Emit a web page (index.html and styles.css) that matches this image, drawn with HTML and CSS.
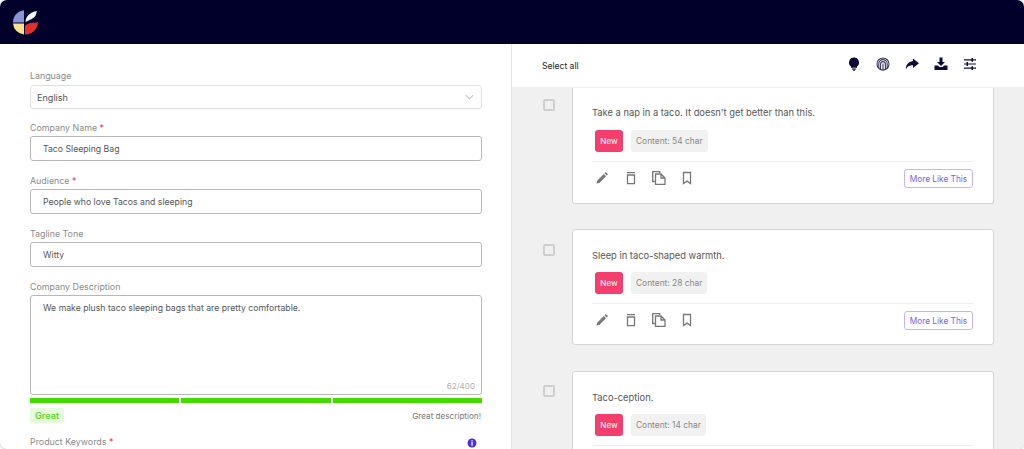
FILE: index.html
```html
<!DOCTYPE html>
<html lang="en">
<head>
<meta charset="utf-8">
<title>Tagline generator</title>
<link rel="stylesheet" href="styles.css">
</head>
<body>
<header class="topbar">
  <svg class="logo" viewBox="0 0 28 28" width="28" height="28">
    <path d="M13 2.200 A12.200 12.200 0 0 0 2 14.500 L13 14.500 Z" fill="#8a94d8"/>
    <path d="M13 15.500 L2 15.500 A12 12 0 0 0 13 26.500 Z" fill="#f8e08e"/>
    <path d="M14 26.500 A12.200 12.200 0 0 0 26.800 14 C23 15.500 17 14 14 18 Z" fill="#e0312f"/>
    <path d="M14.500 14 C14.500 8.500 19.500 4 26 3 C25 5 25.500 7 23.500 9 C22.500 10.500 19 11.500 14.500 14 Z" fill="#f4f4f4"/>
  </svg>
</header>
<main class="layout">
  <section class="form">
    <div class="field field-first">
      <label class="label">Language</label>
      <div class="select">English
        <svg class="chevron" viewBox="0 0 10 6" width="9" height="6"><path d="M1 1l4 4 4-4" fill="none" stroke="#c4c4c4" stroke-width="1.300"/></svg>
      </div>
    </div>
    <div class="field">
      <label class="label">Company Name <span class="req">*</span></label>
      <div class="input">Taco Sleeping Bag</div>
    </div>
    <div class="field">
      <label class="label">Audience <span class="req">*</span></label>
      <div class="input">People who love Tacos and sleeping</div>
    </div>
    <div class="field">
      <label class="label">Tagline Tone</label>
      <div class="input">Witty</div>
    </div>
    <div class="field field-last">
      <label class="label">Company Description</label>
      <div class="textarea">We make plush taco sleeping bags that are pretty comfortable.<span class="count">62/400</span></div>
    </div>
    <div class="meter"><span></span><span></span><span></span></div>
    <div class="quality"><span class="great">Great</span><span class="hint">Great description!</span></div>
    <div class="keywords">
      <label class="label">Product Keywords <span class="req">*</span></label>
      <svg class="info" viewBox="0 0 10 10" width="10" height="10"><circle cx="5" cy="5" r="4.500" fill="#4f2fe0"/><rect x="4.400" y="4.200" width="1.300" height="3.500" fill="#fff"/><rect x="4.400" y="2.300" width="1.300" height="1.300" fill="#fff"/></svg>
    </div>
  </section>
  <section class="results">
    <div class="toolbar">
      <span class="select-all">Select all</span>
      <div class="tools">
        <svg viewBox="0 0 14 14" width="14" height="14"><path d="M7 .5a5 5 0 0 0-3 9V10.800h6V9.500A5 5 0 0 0 7 .5zM5 11.500h4v.9H5zM6 12.800h2v.9H6z" fill="#0c0c38"/></svg>
        <svg viewBox="0 0 14 14" width="14" height="14" fill="none" stroke="#3a3a5c" stroke-width="1.100"><circle cx="7" cy="7" r="6"/><path d="M2.800 11V6.800a4.200 4.200 0 0 1 8.400 0V11.500M4.600 12.500V7a2.400 2.400 0 0 1 4.800 0v6M7 6.500V13.500"/></svg>
        <svg viewBox="0 0 14 14" width="14" height="14"><path d="M8 1.500l6 4.700-6 4.700V8.300C5 8.300 2.500 9 1 12.500c-.5-4 2-7.800 7-8.500z" fill="#0c0c38"/></svg>
        <svg viewBox="0 0 14 14" width="14" height="14"><path d="M5.500 .5h3v4.500H11L7 9 3 5h2.500zM.5 8.500h3.500L5.500 10h3L10 8.500h3.500v4.500H.5z" fill="#0c0c38"/></svg>
        <svg viewBox="0 0 14 14" width="14" height="14" fill="#0c0c38"><path d="M1 2.300h12v1.200H1zM1 6.400h12v1.200H1zM1 10.500h12v1.200H1z"/><path d="M8.500 1h1.500v3.800H8.500zM3.500 5.100h1.500v3.800H3.500zM8.500 9.200h1.500v3.800H8.500z"/></svg>
      </div>
    </div>
    <div class="list">
      <div class="row">
        <span class="check"></span>
        <article class="card">
          <p class="copy">Take a nap in a taco. It doesn't get better than this.</p>
          <div class="tags"><span class="new">New</span><span class="chars">Content: 54 char</span></div>
          <div class="actions">
            <svg viewBox="0 0 14 14" width="14" height="14"><path d="M1.500 12.500l.6-2.800 6.700-6.700 2.200 2.200-6.700 6.700zM9.500 2.300L10.800 1l2.200 2.200-1.300 1.300z" fill="#777"/></svg>
            <svg class="tight" viewBox="0 0 14 14" width="14" height="14" fill="none" stroke="#777" stroke-width="1.300"><path d="M3.500 4h7v8.700h-7zM3 1.700h8"/></svg>
            <svg class="tight-copy" viewBox="0 0 14 14" width="14" height="14" fill="none" stroke="#777" stroke-width="1.300"><path d="M2.700 10.500H.7V.7h7v1.300M3.500 3h5.500l4 4v6.400H3.500zM9 3v4h4"/></svg>
            <svg viewBox="0 0 14 14" width="14" height="14" fill="none" stroke="#777" stroke-width="1.300"><path d="M3.500 1.500h7v11l-3.500-2.400-3.500 2.400z"/></svg>
            <button class="more">More Like This</button>
          </div>
        </article>
      </div>
      <div class="row">
        <span class="check"></span>
        <article class="card">
          <p class="copy">Sleep in taco-shaped warmth.</p>
          <div class="tags"><span class="new">New</span><span class="chars">Content: 28 char</span></div>
          <div class="actions">
            <svg viewBox="0 0 14 14" width="14" height="14"><path d="M1.500 12.500l.6-2.800 6.700-6.700 2.200 2.200-6.700 6.700zM9.500 2.300L10.800 1l2.200 2.200-1.300 1.300z" fill="#777"/></svg>
            <svg class="tight" viewBox="0 0 14 14" width="14" height="14" fill="none" stroke="#777" stroke-width="1.300"><path d="M3.500 4h7v8.700h-7zM3 1.700h8"/></svg>
            <svg class="tight-copy" viewBox="0 0 14 14" width="14" height="14" fill="none" stroke="#777" stroke-width="1.300"><path d="M2.700 10.500H.7V.7h7v1.300M3.500 3h5.500l4 4v6.400H3.500zM9 3v4h4"/></svg>
            <svg viewBox="0 0 14 14" width="14" height="14" fill="none" stroke="#777" stroke-width="1.300"><path d="M3.500 1.500h7v11l-3.500-2.400-3.500 2.400z"/></svg>
            <button class="more">More Like This</button>
          </div>
        </article>
      </div>
      <div class="row">
        <span class="check"></span>
        <article class="card">
          <p class="copy">Taco-ception.</p>
          <div class="tags"><span class="new">New</span><span class="chars">Content: 14 char</span></div>
          <div class="actions"></div>
        </article>
      </div>
    </div>
  </section>
</main>
</body>
</html>
```
FILE: styles.css
```css
* { box-sizing: border-box; }
html { background: #fff; height: 100%; overflow: hidden; }
body {
  margin: 0;
  height: 100%;
  overflow: hidden;
  font-family: Inter, "Liberation Sans", sans-serif;
  font-size: 9px;
  color: #555;
  background: #fff;
  display: flex;
  flex-direction: column;
  border-radius: 7px;
  box-shadow: 0 0 3px #aaa;
}
.topbar {
  height: 44px;
  flex: none;
  background: #00002a;
  display: flex;
  align-items: center;
  padding-left: 11px;
}
.layout { flex: 1; display: flex; min-height: 0; }
.form {
  width: 512px;
  flex: none;
  padding: 25px 29px 0 30px;
  border-right: 1px solid #e6e6e6;
  overflow: hidden;
}
.field { margin-bottom: 13px; }
.field-first { margin-bottom: 12px; }
.field-last { margin-bottom: 3px; }
.label { display: block; font-size: 8.850px; line-height: 12px; color: #8a8a8a; padding-top: 1px; margin-bottom: 2px; }
.field-first .label { margin-bottom: 3px; }
.req { color: #e8304a; }
.select, .input, .textarea {
  border-radius: 3px;
  background: #fff;
  color: #555;
  font-size: 8.700px;
}
.select {
  height: 24px;
  border: 1px solid #e0e0e0;
  padding: 0 6px;
  display: flex;
  align-items: center;
  justify-content: space-between;
  font-size: 9.100px;
}
.chevron { margin-right: 1px; }
.input {
  height: 25px;
  border: 1px solid #b8b8b8;
  padding: 0 12px;
  display: flex;
  align-items: center;
}
.textarea {
  position: relative;
  height: 100px;
  border: 1px solid #b8b8b8;
  padding: 7px 12px;
}
.count { position: absolute; right: 6px; bottom: 3px; color: #b0b0b0; font-size: 8.100px; }
.meter { display: flex; gap: 2px; height: 5px; }
.meter span { flex: 1; background: #44dc00; }
.quality { display: flex; justify-content: space-between; align-items: center; margin-top: 5px; }
.great {
  background: #e6fadc;
  color: #5cd82a;
  font-weight: 600;
  font-size: 9.100px;
  line-height: 15px;
  padding: 0 5px;
  border-radius: 2px;
}
.hint { color: #777; font-size: 8.150px; margin-right: 1px; }
.keywords { display: flex; justify-content: space-between; align-items: flex-start; margin-top: 12px; padding-right: 5px; }
.keywords .label { margin-bottom: 0; }
.info { margin-top: 3px; }
.results { flex: 1; min-width: 0; background: #f0f0f0; display: flex; flex-direction: column; }
.toolbar {
  height: 44px;
  flex: none;
  background: #fff;
  display: flex;
  align-items: center;
  justify-content: space-between;
  padding: 0 47px 0 30px;
  border-bottom: 1px solid #eee;
}
.select-all { color: #222; font-size: 8.550px; }
.tools { display: flex; gap: 15px; margin-bottom: 4px; }
.list { flex: 1; overflow: hidden; padding-right: 30px; }
.row { display: flex; margin-bottom: 25.400px; }
.check {
  flex: none;
  width: 12px;
  height: 12px;
  margin: 11px 17px 0 31px;
  border: 2px solid #cfcfcf;
  border-radius: 2px;
}
.row + .row .check { margin-top: 15px; }
.row:last-child .check { margin-top: 14px; }
.card {
  flex: 1;
  background: #fff;
  border: 1px solid #d4d4d4;
  border-radius: 3px;
  padding: 19px 20px 0 19px;
  height: 116px;
}
.row:first-child .card { border-top: 0; border-radius: 0 0 3px 3px; padding-top: 18px; }
.copy { margin: 0; color: #555; font-size: 9.330px; line-height: 14px; }
.tags { display: flex; gap: 8px; margin-top: 9px; padding: 0 0 9px 3px; border-bottom: 1px solid #eee; }
.row:first-child .tags { margin-top: 10px; }
.new {
  background: #f43f6e;
  color: #fff;
  font-size: 8.200px;
  line-height: 22px;
  width: 28px;
  text-align: center;
  border-radius: 3px;
}
.chars { background: #f1f1f1; color: #888; font-size: 8.400px; line-height: 22px; padding: 0 5px; border-radius: 3px; }
.actions { display: flex; align-items: center; gap: 15px; padding: 7px 0 0 3px; }
.actions svg { margin-bottom: 1px; }
.actions .tight { margin-right: -1.500px; }
.actions .tight-copy { margin-right: -1px; }
.more {
  margin-left: auto;
  border: 1px solid #c4b5fd;
  background: #fff;
  color: #7c5cf0;
  font: 8.300px Inter, sans-serif;
  height: 19px;
  width: 69px;
  padding: 0;
  border-radius: 3px;
}
```
